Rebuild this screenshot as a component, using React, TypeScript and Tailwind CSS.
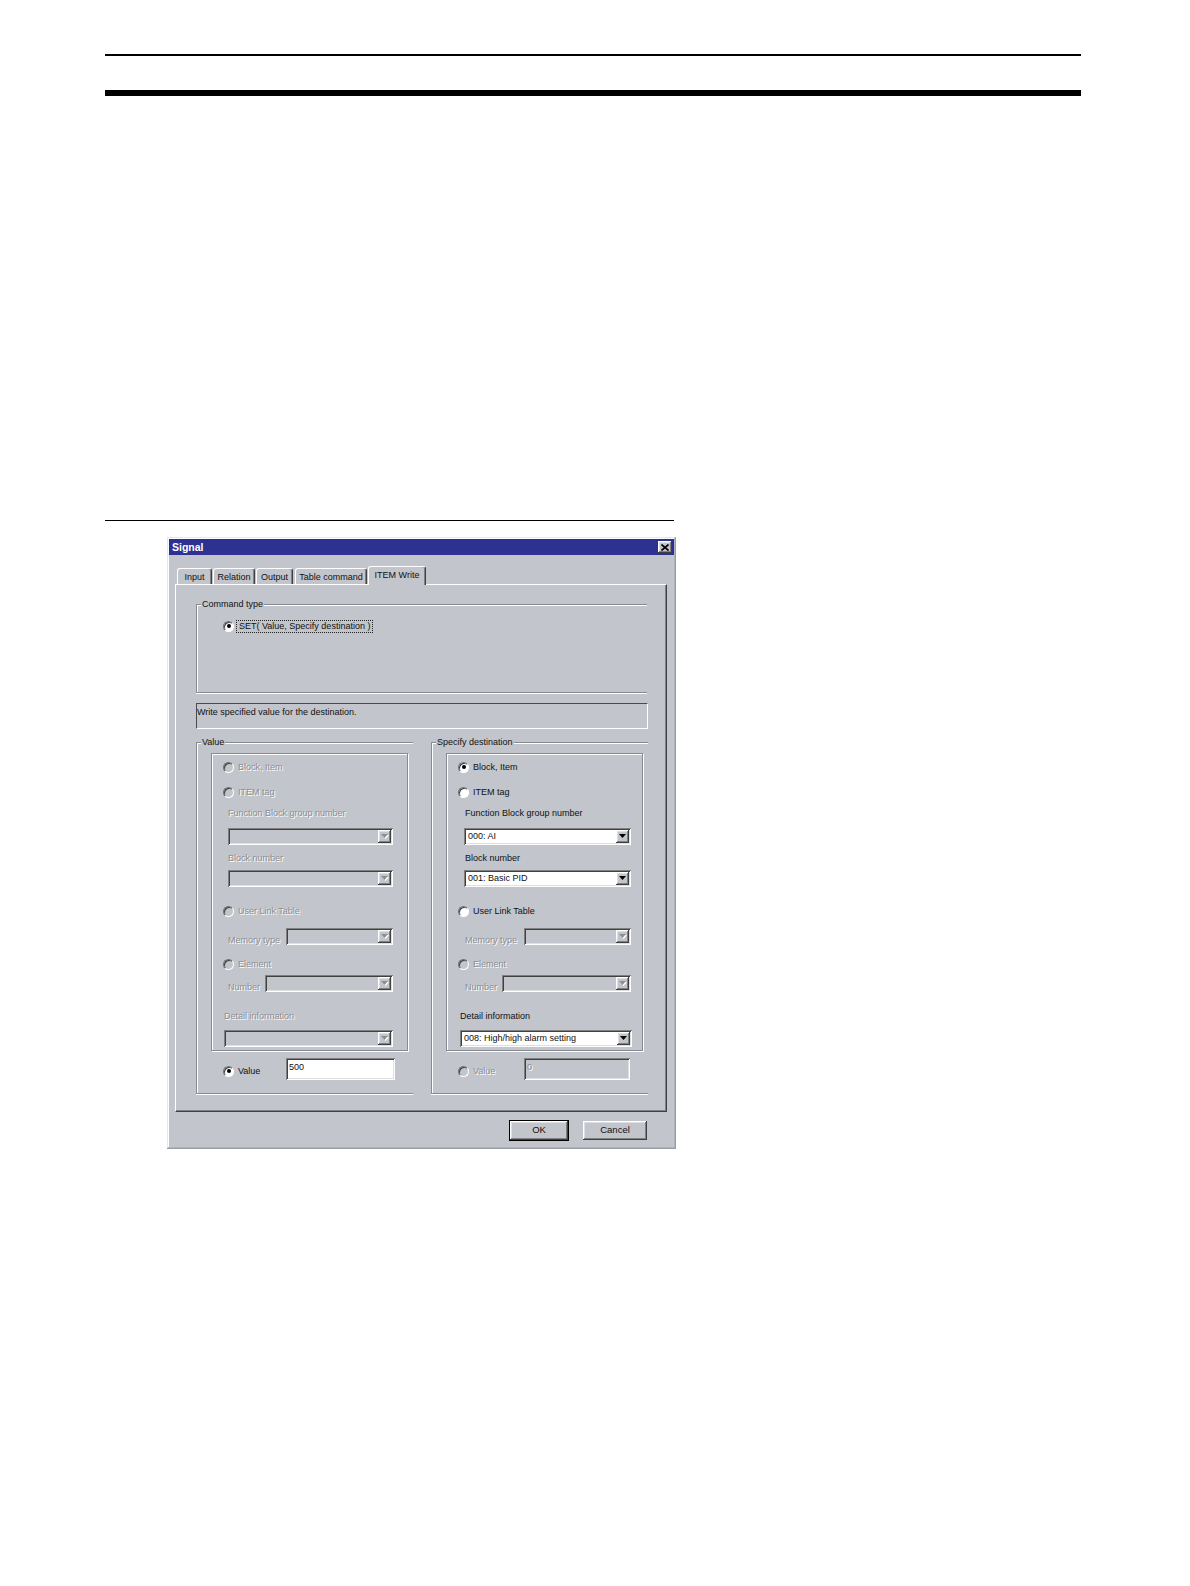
import type { ReactNode } from 'react';

// Win2000-style bevels
const raised =
  'shadow-[inset_-1px_-1px_#404040,inset_1px_1px_#ffffff,inset_-2px_-2px_#808080,inset_2px_2px_#dfdfdf]';
const sunken =
  'shadow-[inset_1px_1px_#808080,inset_-1px_-1px_#ffffff,inset_2px_2px_#404040,inset_-2px_-2px_#dfdfdf]';
const etched = 'border border-[#878a90] shadow-[inset_1px_1px_#ffffff,1px_1px_#ffffff]';
const dim = 'text-[#8b8e94] [text-shadow:1px_1px_0_#ffffff]';

function Legend({ children }: { children: ReactNode }) {
  return (
    <span className="absolute -top-[7px] left-[4px] px-[1px] bg-[#c2c5cc] text-[9px] leading-[12px] text-[#111]">
      {children}
    </span>
  );
}

function Dot({ checked, disabled }: { checked: boolean; disabled: boolean }) {
  return (
    <span
      className={`w-[11px] h-[11px] shrink-0 rounded-full flex items-center justify-center border border-t-[#6f7278] border-l-[#6f7278] border-r-white border-b-white shadow-[inset_1px_1px_#404040] ${
        disabled ? 'bg-[#c2c5cc]' : 'bg-white'
      }`}
    >
      {checked && <span className={`w-[4px] h-[4px] rounded-full ${disabled ? 'bg-[#8b8e94]' : 'bg-black'}`} />}
    </span>
  );
}

function Radio({ label, checked = false, disabled = false }: { label: string; checked?: boolean; disabled?: boolean }) {
  return (
    <div className="flex items-center h-[14px]">
      <Dot checked={checked} disabled={disabled} />
      <span className={`ml-[4px] text-[9px] leading-[12px] whitespace-nowrap ${disabled ? dim : 'text-[#111]'}`}>
        {label}
      </span>
    </div>
  );
}

function Label({ children, disabled = false }: { children: ReactNode; disabled?: boolean }) {
  return (
    <span className={`text-[9px] leading-[12px] whitespace-nowrap ${disabled ? dim : 'text-[#111]'}`}>{children}</span>
  );
}

function Combo({ width, value, disabled = false }: { width: string; value?: string; disabled?: boolean }) {
  return (
    <div className={`${width} h-[17px] p-[2px] flex ${disabled ? 'bg-[#c2c5cc]' : 'bg-white'} ${sunken}`}>
      <span className="flex-1 pl-[2px] text-[9px] leading-[13px] text-[#111] whitespace-nowrap overflow-hidden">
        {value}
      </span>
      <span className={`w-[13px] h-[13px] flex items-center justify-center bg-[#c2c5cc] ${raised}`}>
        <svg width="8" height="5" viewBox="0 0 8 5">
          {disabled && <path d="M1 1H8L4.5 5Z" fill="#ffffff" />}
          <path d="M0 0H7L3.5 4Z" fill={disabled ? '#8b8e94' : '#000000'} />
        </svg>
      </span>
    </div>
  );
}

function Edit({ width, value, disabled = false }: { width: string; value: string; disabled?: boolean }) {
  return (
    <div
      className={`${width} h-[22px] pl-[3px] pt-[3px] text-[9px] leading-[12px] ${sunken} ${
        disabled ? `bg-[#c2c5cc] ${dim}` : 'bg-white text-[#111]'
      }`}
    >
      {value}
    </div>
  );
}

function Side({ dest = false }: { dest?: boolean }) {
  const on = dest;
  const lbl = dest ? 'pl-[18px]' : 'pl-[16px]';
  const cmb = dest ? 'pl-[17px]' : 'pl-[16px]';
  const cw = dest ? 'w-[167px]' : 'w-[165px]';
  const row = dest ? 'ml-[18px] w-[166px]' : 'ml-[16px] w-[165px]';
  const nw = dest ? 'w-[129px]' : 'w-[128px]';
  const dl = dest ? 'pl-[13px]' : 'pl-[12px]';
  const dw = dest ? 'w-[172px]' : 'w-[169px]';

  return (
    <div className="relative w-[217px] h-[352px] border border-r-0 border-[#878a90] shadow-[inset_1px_1px_#ffffff,0_1px_#ffffff]">
      <Legend>{dest ? 'Specify destination' : 'Value'}</Legend>
      <div className={`ml-[14px] mt-[10px] w-[197px] h-[298px] flex flex-col ${etched}`}>
        <div className="pl-[11px] mt-[6px]">
          <Radio label="Block, Item" checked={on} disabled={!on} />
        </div>
        <div className="pl-[11px] mt-[11px]">
          <Radio label="ITEM tag" disabled={!on} />
        </div>
        <div className={`${lbl} mt-[7px] h-[14px] flex items-center`}>
          <Label disabled={!on}>Function Block group number</Label>
        </div>
        <div className={`${cmb} mt-[8px]`}>
          <Combo width={cw} value={on ? '000: AI' : ''} disabled={!on} />
        </div>
        <div className={`${lbl} mt-[6px] h-[14px] flex items-center`}>
          <Label disabled={!on}>Block number</Label>
        </div>
        <div className={`${cmb} mt-[5px]`}>
          <Combo width={cw} value={on ? '001: Basic PID' : ''} disabled={!on} />
        </div>
        <div className="pl-[11px] mt-[17px]">
          <Radio label="User Link Table" disabled={!on} />
        </div>
        <div className={`${row} mt-[10px] h-[17px] flex items-center justify-between`}>
          <span className="pt-[2px]">
            <Label disabled>Memory type</Label>
          </span>
          <Combo width="w-[107px]" disabled />
        </div>
        <div className="pl-[11px] mt-[12px]">
          <Radio label="Element" disabled />
        </div>
        <div className={`${row} mt-[4px] h-[17px] flex items-center justify-between`}>
          <span className="pt-[2px]">
            <Label disabled>Number</Label>
          </span>
          <Combo width={nw} disabled />
        </div>
        <div className={`${dl} mt-[17px] h-[14px] flex items-center`}>
          <Label disabled={!on}>Detail information</Label>
        </div>
        <div className={`${dl} mt-[7px]`}>
          <Combo width={dw} value={on ? '008: High/high alarm setting' : ''} disabled={!on} />
        </div>
      </div>
      <div className="mt-[7px] pl-[26px] flex items-start">
        <div className={dest ? 'w-[66px] mt-[6px]' : 'w-[63px] mt-[6px]'}>
          <Radio label="Value" checked={!on} disabled={on} />
        </div>
        <Edit width={dest ? 'w-[106px]' : 'w-[109px]'} value={on ? '0' : '500'} disabled={on} />
      </div>
    </div>
  );
}

const tabs = [
  { name: 'Input', cls: 'w-[35px]' },
  { name: 'Relation', cls: 'ml-[1px] w-[42px]' },
  { name: 'Output', cls: 'ml-[1px] w-[37px]' },
  { name: 'Table command', cls: 'ml-[2px] w-[72px]' },
];

function Tab({ name, cls }: { name: string; cls: string }) {
  return (
    <div
      className={`${cls} h-[16px] flex items-center justify-center border-t border-l border-r border-t-white border-l-white border-r-[#404040] rounded-t-[3px] shadow-[inset_-1px_0_#808080] text-[9px] leading-[12px] text-[#111] whitespace-nowrap`}
    >
      {name}
    </div>
  );
}

function Button({ label, width, primary = false }: { label: string; width: string; primary?: boolean }) {
  return (
    <div
      className={`${width} h-[19px] flex items-center justify-center bg-[#c2c5cc] text-[9.5px] text-[#111] ${raised} ${
        primary ? 'outline outline-1 outline-black' : ''
      }`}
    >
      {label}
    </div>
  );
}

export default function App() {
  return (
    <div className="w-[1190px] h-[1586px] bg-white overflow-hidden font-['Liberation_Sans',Arial,sans-serif]">
      <div className="pt-[54px] pl-[105px]">
        <div className="w-[976px] h-[2px] bg-black" />
        <div className="mt-[34px] w-[976px] h-[6px] bg-black" />
        <div className="mt-[424px] w-[569px] h-px bg-black" />

        {/* Signal dialog */}
        <div className="mt-[16px] ml-[62px] w-[509px] h-[612px] p-[2px] bg-[#c2c5cc] flex flex-col shadow-[inset_-1px_-1px_#9a9da3,inset_1px_1px_#e6e7ea,inset_-2px_-2px_#b0b3b9,inset_2px_2px_#ffffff]">
          <div className="h-[16px] bg-[#2d3191] flex items-center justify-between pl-[3px] pr-[2px]">
            <span className="text-white font-bold text-[10.5px] leading-[14px]">Signal</span>
            <span className={`w-[14px] h-[12px] bg-[#c2c5cc] flex items-center justify-center ${raised}`}>
              <svg width="8" height="7" viewBox="0 0 8 7">
                <path d="M0.5 0.5L7.5 6.5M7.5 0.5L0.5 6.5" stroke="#000" strokeWidth="1.6" />
              </svg>
            </span>
          </div>

          <div className="mt-[11px] ml-[8px] h-[18px] flex items-end">
            {tabs.map((t) => (
              <Tab key={t.name} name={t.name} cls={t.cls} />
            ))}
            <div className="relative z-10 ml-[1px] w-[58px] h-[19px] -mb-px bg-[#c2c5cc] flex items-start justify-center pt-[2px] border-t border-l border-r border-t-white border-l-white border-r-[#404040] rounded-t-[3px] shadow-[inset_-1px_0_#808080] text-[9px] leading-[12px] text-[#111] whitespace-nowrap">
              ITEM Write
            </div>
          </div>

          <div className="ml-[6px] w-[492px] h-[528px] border border-t-white border-l-white border-r-[#404040] border-b-[#404040] shadow-[inset_-1px_-1px_#808080] pl-[20px] pt-[19px] flex flex-col">
            <div className="relative w-[451px] h-[89px] border border-r-0 border-[#878a90] shadow-[inset_1px_1px_#ffffff,0_1px_#ffffff]">
              <Legend>Command type</Legend>
              <div className="mt-[14px] pl-[26px] h-[14px] flex items-center">
                <Dot checked disabled={false} />
                <span className="ml-[2px] px-[2px] border border-dotted border-[#222] text-[9px] leading-[11px] text-[#111] whitespace-nowrap">
                  SET( Value, Specify destination )
                </span>
              </div>
            </div>

            <div className="mt-[10px] w-[452px] h-[26px] border-t border-l border-t-[#4a4a4a] border-l-[#4a4a4a] border-b border-r border-b-white border-r-white pt-[2px] text-[9px] leading-[12px] text-[#111]">
              Write specified value for the destination.
            </div>

            <div className="mt-[13px] flex">
              <Side />
              <div className="ml-[18px]">
                <Side dest />
              </div>
            </div>
          </div>

          <div className="mt-[9px] pr-[27px] flex justify-end gap-[15px]">
            <Button label="OK" width="w-[58px]" primary />
            <Button label="Cancel" width="w-[64px]" />
          </div>
        </div>
      </div>
    </div>
  );
}
